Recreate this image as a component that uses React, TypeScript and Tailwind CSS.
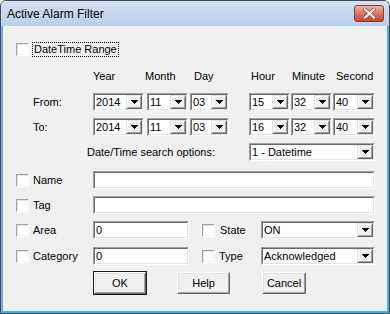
import React from 'react';

const Sunken = ({ className = '', children }: { className?: string; children?: React.ReactNode }) => (
  <div className={`border border-t-[#a0a0a0] border-l-[#a0a0a0] border-r-white border-b-white ${className}`}>
    <div className="flex h-full w-full items-center border border-t-[#696969] border-l-[#696969] border-r-[#e3e3e3] border-b-[#e3e3e3] bg-white">
      {children}
    </div>
  </div>
);

const Arrow = () => (
  <div className="flex h-full w-[16px] items-center justify-center border border-t-[#e3e3e3] border-l-[#e3e3e3] border-r-[#696969] border-b-[#696969] bg-[#f0f0f0]">
    <div className="flex h-full w-full items-center justify-center border border-t-white border-l-white border-r-[#a0a0a0] border-b-[#a0a0a0]">
      <svg width="7" height="4" viewBox="0 0 7 4" shapeRendering="crispEdges">
        <path d="M0 0h7v1H0zM1 1h5v1H1zM2 2h3v1H2zM3 3h1v1H3z" fill="#000" />
      </svg>
    </div>
  </div>
);

const Combo = ({ value, className = '' }: { value: string; className?: string }) => (
  <Sunken className={`h-[18px] ${className}`}>
    <span className="flex-1 truncate pl-[1px] leading-[14px]">{value}</span>
    <Arrow />
  </Sunken>
);

const Field = ({ value = '', className = '' }: { value?: string; className?: string }) => (
  <Sunken className={`h-[18px] ${className}`}>
    <span className="pl-[1px] leading-[14px]">{value}</span>
  </Sunken>
);

const Check = () => (
  <div className="h-[13px] w-[13px] shrink-0 border border-t-[#a0a0a0] border-l-[#a0a0a0] border-r-white border-b-white">
    <div className="h-full w-full border border-t-[#e3e3e3] border-l-[#e3e3e3] border-r-[#f4f4f4] border-b-[#f4f4f4] bg-white" />
  </div>
);

const Button = ({ label, className = '', isDefault = false }: { label: string; className?: string; isDefault?: boolean }) => {
  const face = (
    <div className="h-full w-full border border-t-white border-l-white border-r-[#696969] border-b-[#696969] bg-[#f0f0f0]">
      <div className="flex h-full w-full items-center justify-center border border-t-[#e3e3e3] border-l-[#e3e3e3] border-r-[#a0a0a0] border-b-[#a0a0a0]">
        {label}
      </div>
    </div>
  );
  if (isDefault) {
    return <div className={`h-[24px] border border-[#1a1a1a] ${className}`}>{face}</div>;
  }
  return <div className={`h-[22px] ${className}`}>{face}</div>;
};

const CheckRow = ({ label, children }: { label: string; children: React.ReactNode }) => (
  <div className="flex h-[18px] items-center">
    <div className="flex w-[90px] items-center pl-[13px]">
      <Check />
      <span className="ml-[4px]">{label}</span>
    </div>
    {children}
  </div>
);

export default function App() {
  return (
    <div className="h-[314px] w-[390px] bg-white font-['Liberation_Sans',Arial,sans-serif] text-[11px] text-black">
      <div className="flex h-full w-full flex-col overflow-hidden rounded-t-[6px] border border-[#3f4b5a] bg-[#b9d1ea]">
        {/* title bar */}
        <div className="flex h-[25px] shrink-0 items-start bg-linear-to-b from-[#d3e1f2] to-[#b9d0ea] pl-[6px] pr-[5px]">
          <span className="mt-[6px] text-[12px] leading-[15px] text-black">Active Alarm Filter</span>
          <div className="ml-auto mt-[4px] flex h-[17px] w-[30px] items-center justify-center rounded-[3px] border border-[#8a3a2e] bg-linear-to-b from-[#eab3a6] via-[#d77a66] to-[#c5442f]">
            <svg width="13" height="11" viewBox="0 0 13 11">
              <path d="M2 1.5 L11 9.5 M11 1.5 L2 9.5" stroke="#8c3a2c" strokeWidth="3.6" strokeLinecap="square" />
              <path d="M2 1.5 L11 9.5 M11 1.5 L2 9.5" stroke="#ffffff" strokeWidth="2.2" strokeLinecap="square" />
            </svg>
          </div>
        </div>

        {/* client */}
        <div className="flex flex-1 flex-col border-b-2 border-l-2 border-r-2 border-b-[#36b8e4] border-l-[#7ea6da] border-r-[#36b8e4] bg-[#f0f0f0] pt-[16px]">
          <div className="flex h-[15px] items-center pl-[13px]">
            <Check />
            <span className="ml-[3px] border border-dotted border-black px-[1px] leading-[13px]">DateTime Range</span>
          </div>

          <div className="mt-[13px] flex h-[13px] items-center pl-[90px] leading-[13px]">
            <span className="w-[52px]">Year</span>
            <span className="w-[49px]">Month</span>
            <span className="w-[57px]">Day</span>
            <span className="w-[41px]">Hour</span>
            <span className="w-[44px]">Minute</span>
            <span>Second</span>
          </div>

          {[
            { label: 'From:', v: ['2014', '11', '03', '15', '32', '40'], mt: 'mt-[10px]' },
            { label: 'To:', v: ['2014', '11', '03', '16', '32', '40'], mt: 'mt-[7px]' },
          ].map((r) => (
            <div key={r.label} className={`flex h-[18px] items-center ${r.mt}`}>
              <span className="w-[90px] pl-[30px]">{r.label}</span>
              <Combo value={r.v[0]} className="w-[51px]" />
              <Combo value={r.v[1]} className="ml-[3px] w-[41px]" />
              <Combo value={r.v[2]} className="ml-[2px] w-[39px]" />
              <Combo value={r.v[3]} className="ml-[20px] w-[41px]" />
              <Combo value={r.v[4]} className="ml-[1px] w-[41px]" />
              <Combo value={r.v[5]} className="ml-[1px] w-[42px]" />
            </div>
          ))}

          <div className="mt-[7px] flex h-[18px] items-center">
            <span className="w-[246px] pl-[84px]">Date/Time search options:</span>
            <Combo value="1 - Datetime" className="w-[126px]" />
          </div>

          <div className="mt-[10px]">
            <CheckRow label="Name">
              <Field className="w-[282px]" />
            </CheckRow>
          </div>
          <div className="mt-[7px]">
            <CheckRow label="Tag">
              <Field className="w-[282px]" />
            </CheckRow>
          </div>
          <div className="mt-[7px]">
            <CheckRow label="Area">
              <Field value="0" className="w-[96px]" />
              <div className="ml-[13px] flex w-[59px] items-center">
                <Check />
                <span className="ml-[5px]">State</span>
              </div>
              <Combo value="ON" className="w-[114px]" />
            </CheckRow>
          </div>
          <div className="mt-[8px]">
            <CheckRow label="Category">
              <Field value="0" className="w-[96px]" />
              <div className="ml-[13px] flex w-[59px] items-center">
                <Check />
                <span className="ml-[4px]">Type</span>
              </div>
              <Combo value="Acknowledged" className="w-[114px]" />
            </CheckRow>
          </div>

          <div className="mt-[6px] flex h-[24px] items-center pl-[90px]">
            <Button label="OK" isDefault className="w-[54px]" />
            <Button label="Help" className="ml-[30px] w-[53px]" />
            <Button label="Cancel" className="ml-[32px] w-[44px]" />
          </div>
        </div>
      </div>
    </div>
  );
}
